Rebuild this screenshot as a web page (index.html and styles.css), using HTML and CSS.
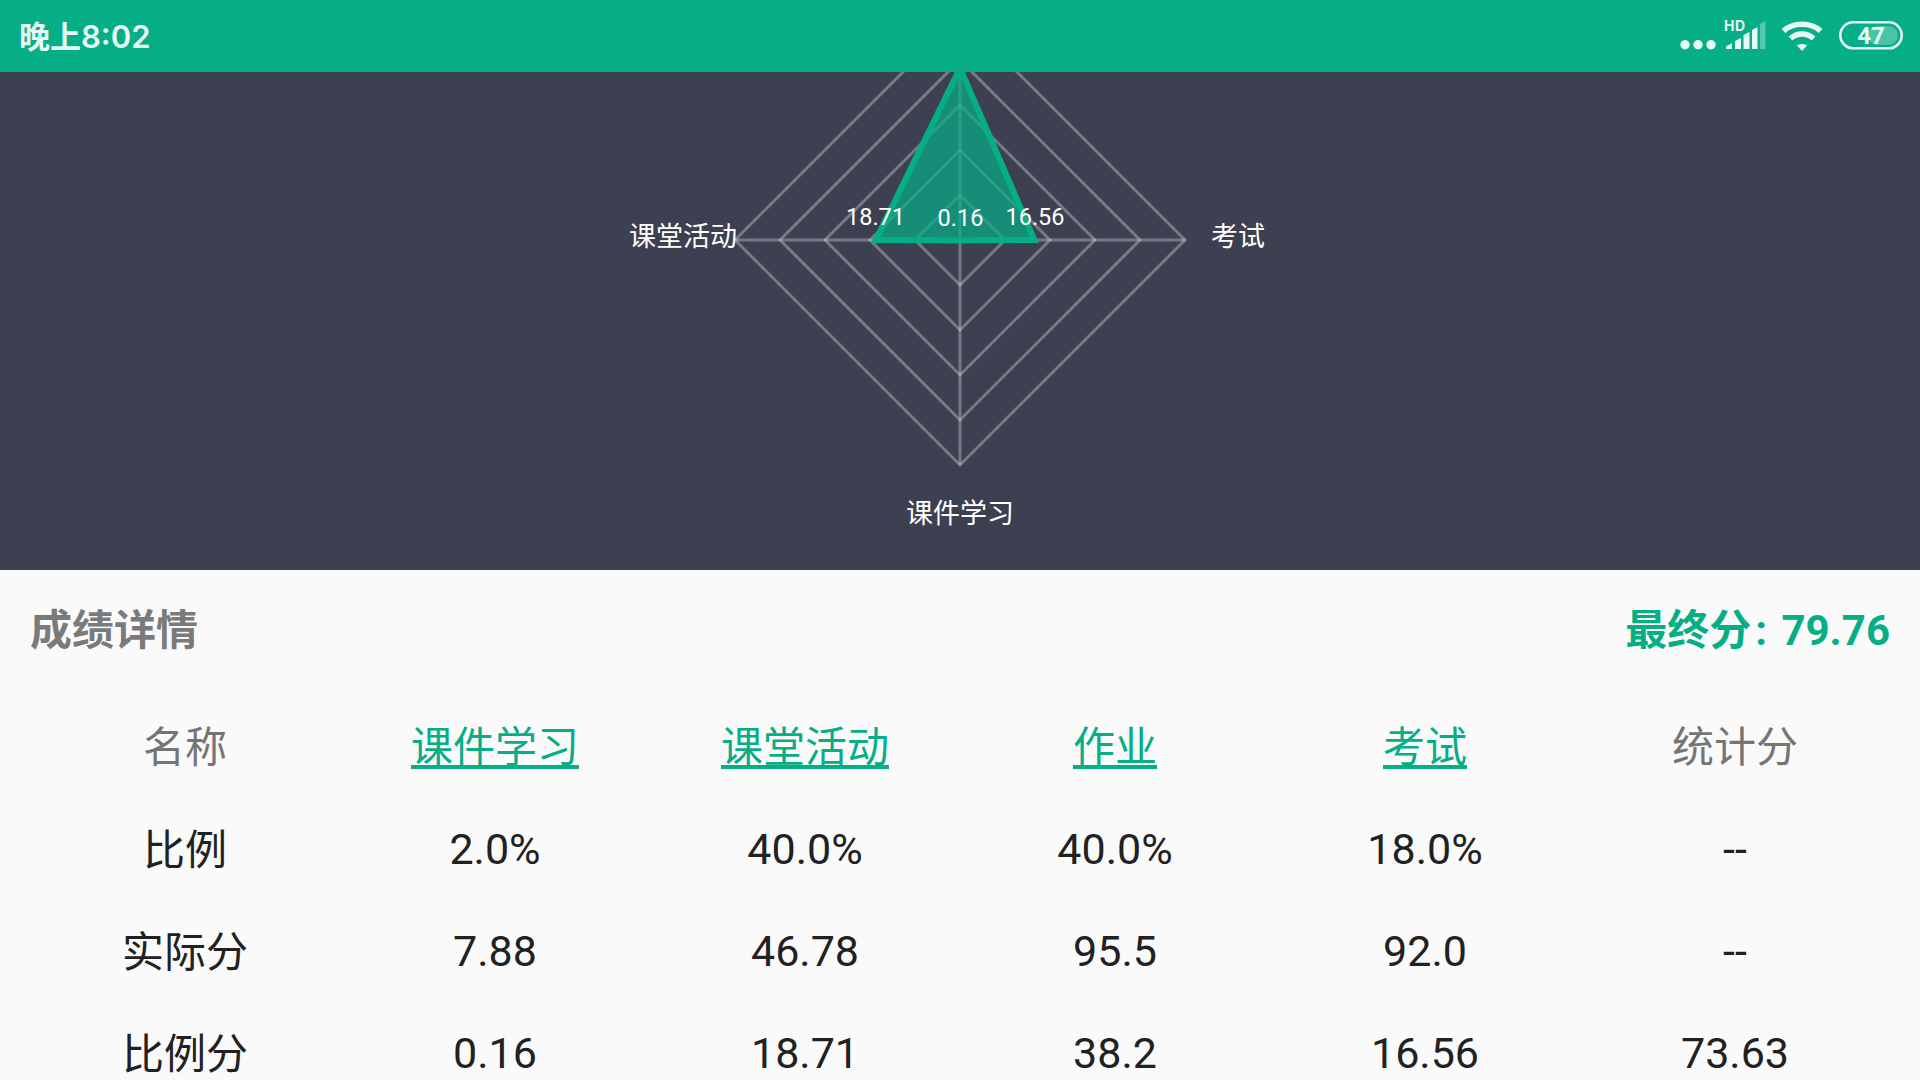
FILE: index.html
```html
<!DOCTYPE html>
<html lang="zh-CN">

<head>
    <meta charset="UTF-8">
    <title>成绩详情</title>
    <link rel="stylesheet" href="styles.css">
</head>

<body>
    <div class="status-bar">
        <span class="clock">晚上8:02</span>
        <div class="status-icons">
            <svg class="icon-dots" viewBox="0 0 38 72">
                <circle cx="7" cy="44.700" r="4.700"></circle>
                <circle cx="20" cy="44.700" r="4.700"></circle>
                <circle cx="33" cy="44.700" r="4.700"></circle>
            </svg>
            <svg class="icon-signal" viewBox="0 0 44 72">
                <text class="hd" x="2" y="31">HD</text>
                <path d="M4 49v-2.500l6-3.500v6z"></path>
                <path d="M13 49v-8l6-3v11z"></path>
                <path d="M21.500 49v-14l6-3v17z"></path>
                <path d="M30 49v-19l5.500-3v22z"></path>
                <path class="dim" d="M38 49v-25l5.500-3v28z"></path>
            </svg>
            <svg class="icon-wifi" viewBox="0 0 42 72">
                <path class="arc" d="M2.500 31C12 22 30 22 39.500 31"></path>
                <path class="arc" d="M9.500 38.500C16 32.500 26 32.500 32.500 38.500"></path>
                <path d="M16 45.500C18.500 43.500 23.500 43.500 26 45.500L21 51z"></path>
            </svg>
            <svg class="icon-battery" viewBox="0 0 64 72">
                <rect class="batt-level" x="29" y="26" width="30" height="19" rx="9.500"></rect>
                <rect class="batt-frame" x="1.300" y="22.300" width="61.400" height="26" rx="13"></rect>
                <text class="batt-text" x="32" y="44">47</text>
            </svg>
        </div>
    </div>

    <div class="chart-panel">
        <svg class="radar" viewBox="0 0 1920 498">
            <!-- rings, step 45 -->
            <g class="grid">
                <polygon points="960,123 1005,168 960,213 915,168"></polygon>
                <polygon points="960,78 1050,168 960,258 870,168"></polygon>
                <polygon points="960,33 1095,168 960,303 825,168"></polygon>
                <polygon points="960,-12 1140,168 960,348 780,168"></polygon>
                <polygon points="960,-57 1185,168 960,393 735,168"></polygon>
                <line x1="735" y1="168" x2="1185" y2="168"></line>
                <line x1="960" y1="-57" x2="960" y2="393"></line>
            </g>
            <polygon class="area" points="960,-4 1034.500,168 960,168.500 875.800,168"></polygon>
            <text class="axis-label" x="683" y="173.500">课堂活动</text>
            <text class="axis-label" x="1238" y="173.500">考试</text>
            <text class="axis-label" x="960" y="451">课件学习</text>
            <text class="value-label" x="875.500" y="153">18.71</text>
            <text class="value-label" x="960.500" y="154">0.16</text>
            <text class="value-label" x="1035" y="153">16.56</text>
        </svg>
    </div>

    <div class="details">
        <div class="details-head">
            <span class="details-title">成绩详情</span>
            <span class="final-score">最终分<span class="colon">:</span> 79.76</span>
        </div>
        <table class="score-table">
            <tr>
                <th>名称</th>
                <th><a href="#">课件学习</a></th>
                <th><a href="#">课堂活动</a></th>
                <th><a href="#">作业</a></th>
                <th><a href="#">考试</a></th>
                <th>统计分</th>
            </tr>
            <tr>
                <td class="row-name">比例</td>
                <td>2.0%</td>
                <td>40.0%</td>
                <td>40.0%</td>
                <td>18.0%</td>
                <td>--</td>
            </tr>
            <tr>
                <td class="row-name">实际分</td>
                <td>7.88</td>
                <td>46.78</td>
                <td>95.5</td>
                <td>92.0</td>
                <td>--</td>
            </tr>
            <tr>
                <td class="row-name">比例分</td>
                <td>0.16</td>
                <td>18.71</td>
                <td>38.2</td>
                <td>16.56</td>
                <td>73.63</td>
            </tr>
        </table>
    </div>
</body>

</html>
```

FILE: styles.css
```css
body {
    margin: 0;
    height: 1080px;
    overflow: hidden;
    font-family: Roboto, "Noto Sans CJK SC", sans-serif;
    background-color: #fafafa;
}

.status-bar {
    display: flex;
    justify-content: space-between;
    align-items: center;
    height: 72px;
    padding: 0 17px 0 19px;
    background-color: #06ae86;
}

.clock {
    margin-top: -4px;
    font-family: Inter, "Noto Sans CJK SC", sans-serif;
    font-size: 31px;
    font-weight: 600;
    color: #e6f8f3;
}

.status-icons {
    display: flex;
    height: 72px;
}

.status-icons svg {
    display: block;
    height: 72px;
    fill: #e6f8f3;
}

.icon-dots {
    width: 38px;
}

.icon-signal {
    width: 44px;
    margin-left: 6px;
}

.icon-wifi {
    width: 42px;
    margin-left: 15px;
}

.icon-battery {
    width: 64px;
    margin-left: 16px;
}

.hd {
    font-family: Inter, sans-serif;
    font-size: 14px;
    font-weight: 700;
    letter-spacing: 0.5px;
}

.dim {
    opacity: 0.35;
}

.arc {
    fill: none;
    stroke: #e6f8f3;
    stroke-width: 5.5;
}

.batt-level {
    opacity: 0.3;
}

.batt-frame {
    fill: none;
    stroke: #e6f8f3;
    stroke-width: 2.6;
}

.batt-text {
    font-family: Roboto, sans-serif;
    font-size: 24px;
    font-weight: 700;
    text-anchor: middle;
}

.chart-panel {
    height: 498px;
    background-color: #3c4051;
}

.radar {
    display: block;
    width: 1920px;
    height: 498px;
}

.grid polygon,
.grid line {
    fill: none;
    stroke: rgba(255, 255, 255, 0.3);
    stroke-width: 3;
}

.area {
    fill: rgba(6, 174, 134, 0.7);
    stroke: #06ae86;
    stroke-width: 6;
}

.axis-label,
.value-label {
    fill: #fff;
    text-anchor: middle;
}

.axis-label {
    font-size: 27px;
}

.value-label {
    font-size: 23.500px;
}

.details {
    padding: 0 30px;
}

.details-head {
    display: flex;
    justify-content: space-between;
    align-items: center;
    height: 112px;
    font-size: 42px;
    font-weight: 700;
}

.details-title {
    color: #7a7a7a;
}

.final-score {
    color: #06ae86;
}

.colon {
    margin: 0 4px;
}

.score-table {
    width: 100%;
    margin-top: 14px;
    border-collapse: collapse;
    table-layout: fixed;
    font-size: 43px;
}

.score-table th,
.score-table td {
    box-sizing: border-box;
    height: 102px;
    padding: 0;
    text-align: center;
    font-weight: 400;
}

.score-table th {
    padding-bottom: 7px;
    font-size: 42px;
    color: #757575;
}

.score-table td {
    color: #212121;
}

.score-table .row-name {
    padding-bottom: 6px;
    font-size: 42px;
}

.score-table a {
    color: #06ae86;
}
```
